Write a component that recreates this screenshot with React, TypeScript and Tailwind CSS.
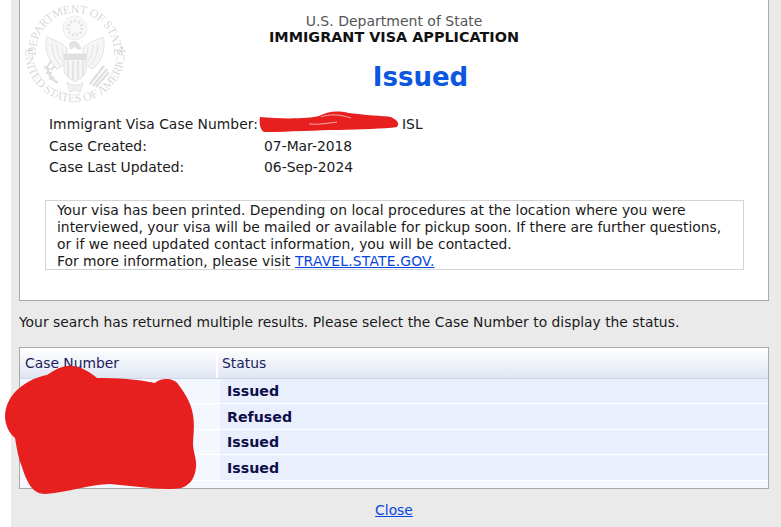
const FONT = "font-['DejaVu_Sans',sans-serif]";

function Seal() {
  const c = "#e2e2e2";
  const d = "#ececec";
  return (
    <svg className="absolute left-[20px] top-0 blur-[0.3px]" width="110" height="110" viewBox="0 0 110 110">
      <defs>
        <path id="topArc" d="M30 82 A39 39 0 1 1 80 82" fill="none" />
        <path id="botArc" d="M16.7 20 A50 50 0 1 0 93.3 20" fill="none" />
      </defs>
      <text fontFamily="'Liberation Serif',serif" fontSize="12" fill="#d8d8d8" letterSpacing="-0.3" textAnchor="middle">
        <textPath href="#topArc" startOffset="50%">DEPARTMENT OF STATE</textPath>
      </text>
      <text fontFamily="'Liberation Serif',serif" fontSize="12" fill="#d8d8d8" letterSpacing="-0.1" textAnchor="middle">
        <textPath href="#botArc" startOffset="50%">UNITED STATES OF AMERICA</textPath>
      </text>
      <circle cx="10" cy="50" r="1.3" fill="#d4d4d4" />
      <circle cx="102" cy="48" r="1.3" fill="#d4d4d4" />
      <circle cx="55" cy="28" r="12" fill="#f8f8f8" stroke={d} />
      <circle cx="55" cy="28" r="7" fill="none" stroke={c} strokeWidth="3" strokeDasharray="2 2" />
      <path d="M47 48 C40 42 35 40 27 37 C24 46 27 60 37 69 L46 64 Z" fill="#f6f6f6" stroke={c} />
      <path d="M63 48 C70 42 75 40 83 37 C86 46 83 60 73 69 L64 64 Z" fill="#f6f6f6" stroke={c} />
      <path d="M32 44 C32 52 35 60 40 65M37 45 C37 52 39 58 43 62M42 47 C42 52 43 56 45 59" stroke={c} fill="none" />
      <path d="M78 44 C78 52 75 60 70 65M73 45 C73 52 71 58 67 62M68 47 C68 52 67 56 65 59" stroke={c} fill="none" />
      <path d="M49 44 C50 40 57 40 59 44 L62 49 L58 50 L55 47 L50 50 Z" fill={c} />
      <path d="M44 54 L66 54 L66 70 C66 76 59 79 55 82 C51 79 44 76 44 70 Z" fill="#f5f5f5" stroke={c} />
      <path d="M44 54 H66 V60 H44 Z" fill="#e0e0e0" />
      <path d="M48 61V76M53 61V80M58 61V80M63 61V76" stroke={c} strokeWidth="1.6" />
      <path d="M38 83 C32 80 28 74 27 66 M30 69l-6 -2M32 73l-6 0M34 77l-5 2M28 66l3 -5M31 70l4 -4" stroke="#dedede" strokeWidth="2.2" fill="none" />
      <path d="M70 84 L84 66 M73 86 L87 69 M76 87 L89 72" stroke="#dedede" strokeWidth="2.2" />
      <path d="M47 82 C50 86 60 86 63 82 L60 92 L55 90 L50 92 Z" fill="#f2f2f2" stroke={c} />
    </svg>
  );
}

function Scribble({ className, d, w, h, extra }: { className: string; d: string; w: number; h: number; extra?: string }) {
  return (
    <svg className={className} width={w} height={h} viewBox={`0 0 ${w} ${h}`}>
      <path d={d} fill="#e81f1f" />
      {extra && <path d={extra} fill="none" stroke="#f9c9c9" strokeWidth="0.8" />}
    </svg>
  );
}

const rows = [
  { s: "Issued", h: "h-[25px]", p: "" },
  { s: "Refused", h: "h-[26px]", p: "pt-[1px]" },
  { s: "Issued", h: "h-[25px]", p: "" },
  { s: "Issued", h: "h-[26px]", p: "pt-[1px]" },
];

export default function App() {
  return (
    <div className={`${FONT} relative w-[781px] h-[527px] overflow-hidden bg-white text-[13.87px] leading-[17px] text-[#1a1a1a]`}>
      <div className="ml-[11px] h-full bg-[#eaeaea] pl-[8px] pr-[12px] flex flex-col">
        <div className="relative h-[301px] w-[750px] shrink-0 bg-white border-x border-b border-[#a9a9a9] pt-[13px]">
          <div className="text-center text-[14px] leading-[16px] text-[#555]">U.S. Department of State</div>
          <div className="text-center font-bold text-[14.4px] leading-[17px] text-[#111]">IMMIGRANT VISA APPLICATION</div>
          <div className="text-center font-bold text-[26px] leading-[30px] text-[#0b57e0] mt-[16px] pl-[53px]">Issued</div>
          <div className="ml-[29px] mt-[22px] flex flex-col">
            <div className="flex h-[21px] items-center"><span className="w-[215px] shrink-0 tracking-[0.03px]">Immigrant Visa Case Number:</span><span className="ml-[138px]">ISL</span></div>
            <div className="flex h-[22px] items-center"><span className="w-[215px] shrink-0">Case Created:</span><span>07-Mar-2018</span></div>
            <div className="flex h-[21px] items-center"><span className="w-[215px] shrink-0">Case Last Updated:</span><span>06-Sep-2024</span></div>
          </div>
          <div className="ml-[25px] mt-[22px] w-[699px] h-[70px] border border-[#d3d3d3] pl-[11px] pt-[1px]">
            Your visa has been printed. Depending on local procedures at the location where you were<br />
            interviewed, your visa will be mailed or available for pickup soon. If there are further questions,<br />
            or if we need updated contact information, you will be contacted.<br />
            For more information, please visit <a href="#" className="text-[#0645dd] underline tracking-[0.2px]">TRAVEL.STATE.GOV.</a>
          </div>
        </div>
        <div className="mt-[13px] h-[17px]">Your search has returned multiple results. Please select the Case Number to display the status.</div>
        <div className="mt-[16px] h-[142px] w-[750px] shrink-0 border border-[#a9a9a9] bg-[#f4f7fe] text-[#1c1c5e]">
          <div className="flex h-[31px] bg-gradient-to-b from-white to-[#dfe5f2] border-b border-[#cfd6e6]">
            <div className="w-[198px] pl-[5px] flex items-center border-r-2 border-white">Case Number</div>
            <div className="flex-1 pl-[4px] flex items-center">Status</div>
          </div>
          <div className="flex flex-col">
            {rows.map((r, i) => (
              <div key={i} className={`flex ${r.h} border-b border-white`}>
                <div className="w-[200px]" />
                <div className={`flex-1 bg-[#e9effc] pl-[7px] flex items-center font-bold text-[14.2px] text-[#0e0e4a] ${r.p}`}>{r.s}</div>
              </div>
            ))}
          </div>
        </div>
        <div className="mt-[13px] text-center">
          <a href="#" className="text-[#0645dd] underline">Close</a>
        </div>
      </div>
      <Seal />
      <Scribble className="absolute left-[259px] top-[110px]" w={141} h={24} d="M1 7 C20 9 50 9 60 6 C68 2 76 0 90 3 C105 5 125 6 132 7 C138 10 141 13 138 17 C125 19 100 19 80 20 C60 20 30 22 5 22 C1 20 0 12 1 7 Z" extra="M62 7 C70 4 80 4 92 8M50 14 C60 15 70 13 78 12" />
      <Scribble className="absolute left-[5px] top-[365px]" w={193} h={131} d="M0 51 C1 28 22 14 42 10 C50 5 58 0 67 1 C76 1 86 8 92 13 C112 13 132 14 150 18 C155 13 168 12 173 19 C178 26 186 36 188 50 C190 62 188 72 188 80 C189 90 192 96 191 102 C190 112 186 120 176 123 C160 126 130 121 105 119 C85 119 60 128 40 129 C28 129 22 118 17 102 C13 92 12 84 10 73 C4 68 0 60 0 51 Z" />
    </div>
  );
}
